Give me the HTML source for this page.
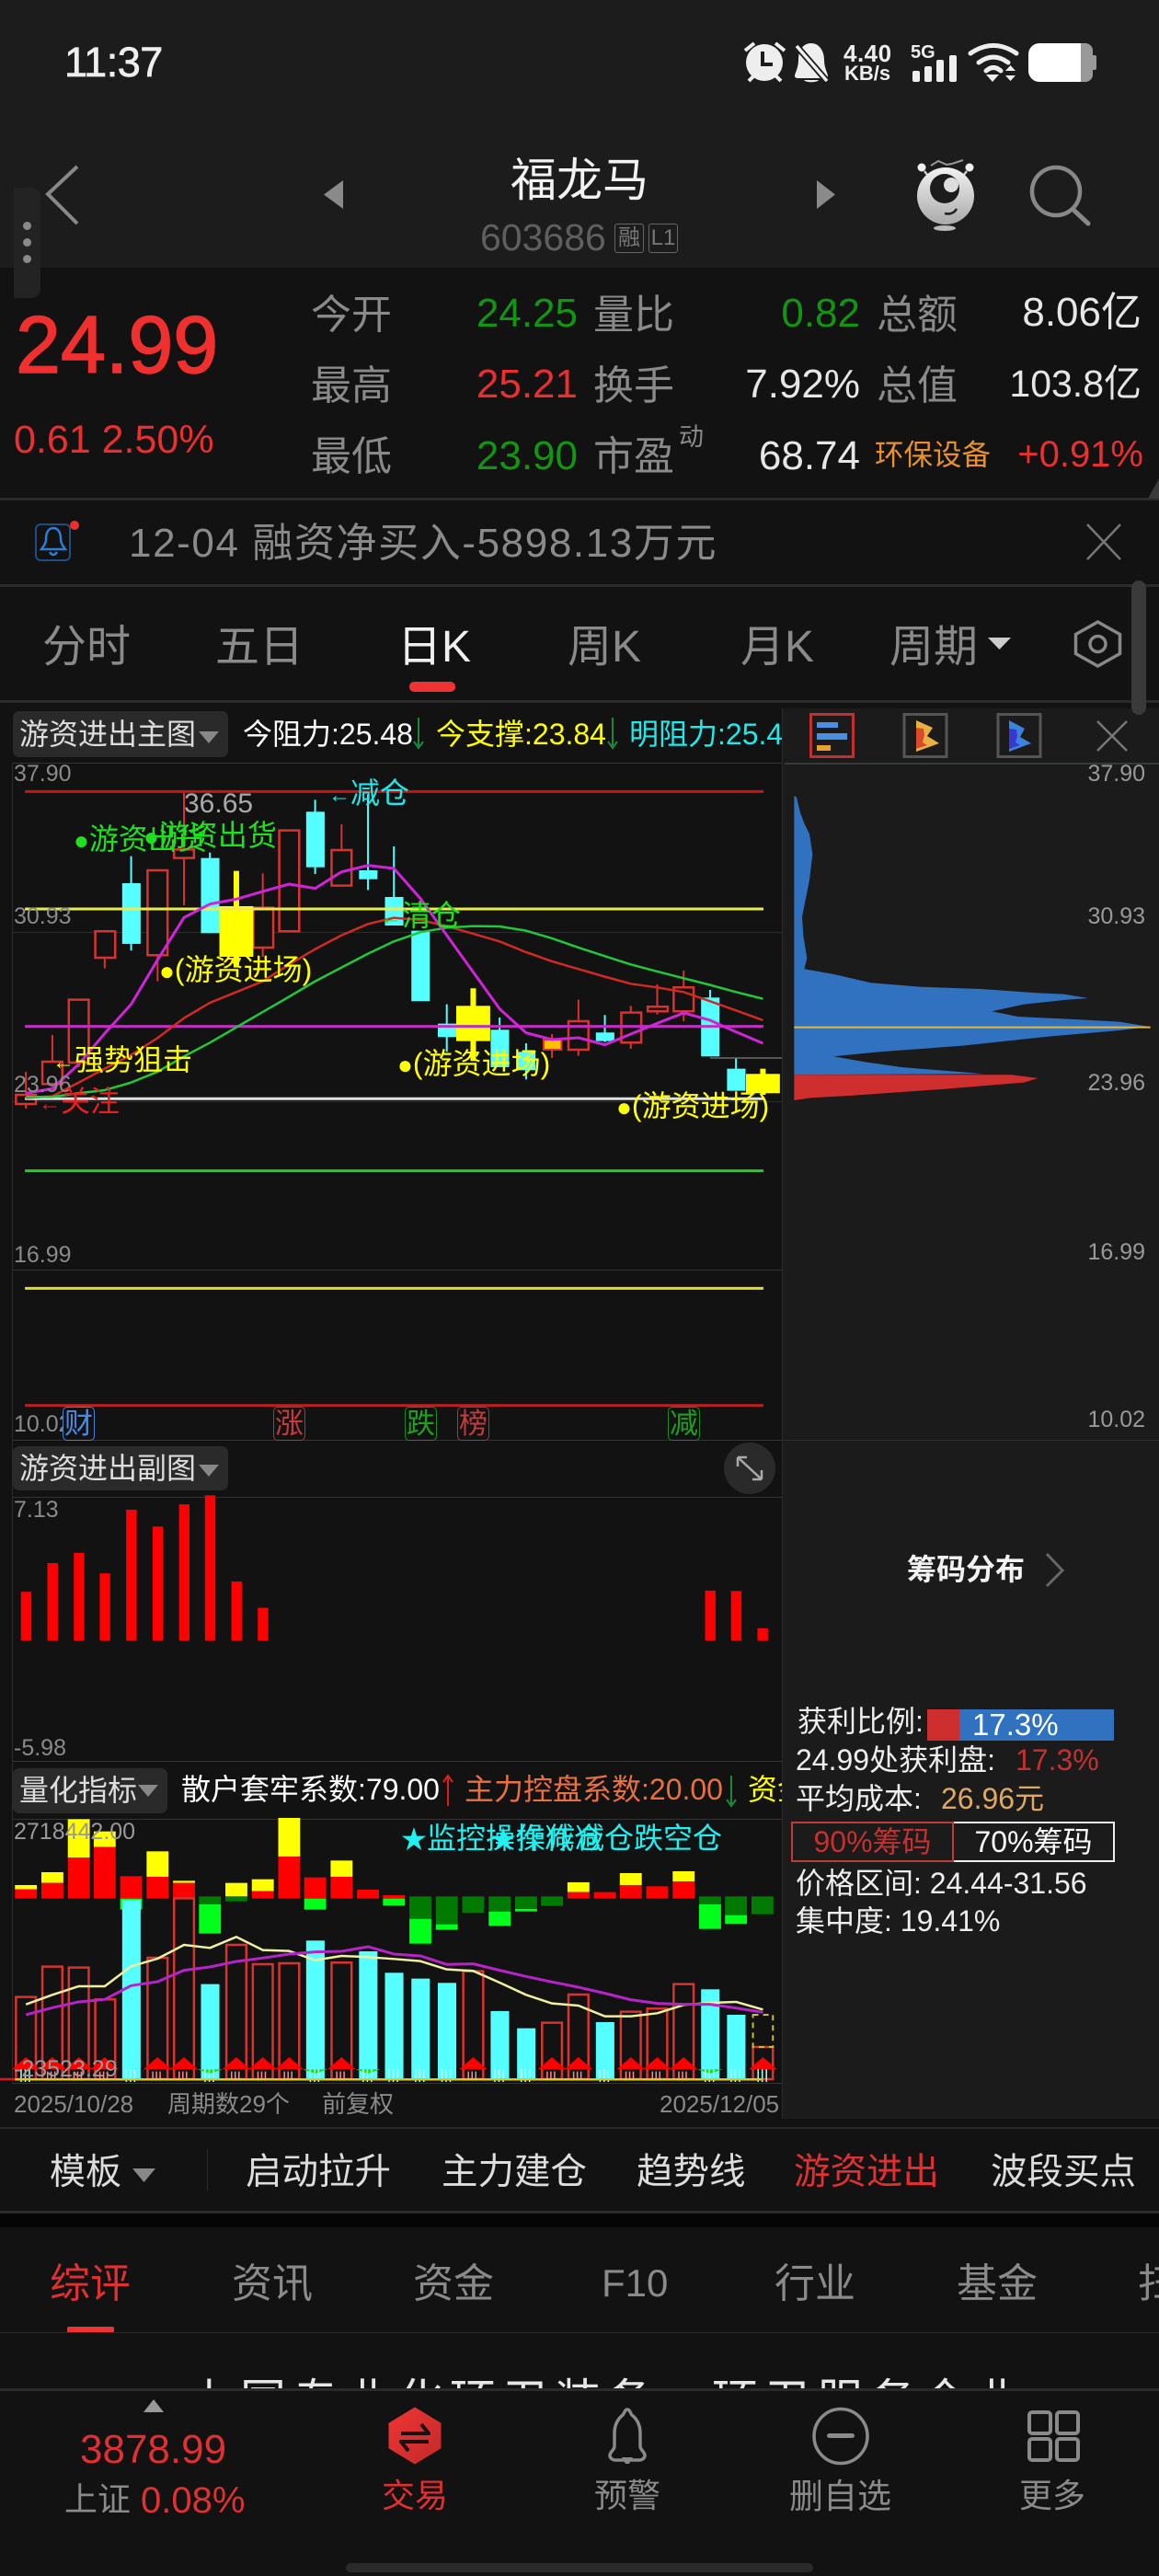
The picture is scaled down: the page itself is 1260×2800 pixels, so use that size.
<!DOCTYPE html>
<html lang="zh"><head><meta charset="utf-8"><title>福龙马</title>
<style>
html,body{margin:0;padding:0;background:#121213;}
#p{position:relative;width:1260px;height:2800px;overflow:hidden;background:#121213;font-family:"Liberation Sans","Noto Sans CJK SC",sans-serif;color:#ddd;}
.t{position:absolute;white-space:nowrap;line-height:1;}
.b{position:absolute;}
.g{color:#8a8a8a}.gr{color:#129612}.rd{color:#ea2f2f}.wh{color:#e6e6e6}
svg{position:absolute;left:0;top:0;overflow:visible;}
.r{fill:none;stroke:#d8332f;stroke-width:2.5;vector-effect:non-scaling-stroke}
.rf{fill:#121213;stroke:#d8332f;stroke-width:2.5;vector-effect:non-scaling-stroke}
.c{fill:#55ffff}.y{fill:#ff0}.re{fill:#f00}.dg{fill:#007a00}.bg{fill:#00ff1a}
.l{fill:none;vector-effect:non-scaling-stroke;stroke-linejoin:round}
.pill{position:absolute;left:14px;background:#2a2a2b;border-radius:7px;}
.a{font-size:32px}
.d{font-size:28px;vertical-align:0}
.badge{position:absolute;top:1529px;width:33px;height:35px;border:1px solid;border-radius:5px;font-size:31px;line-height:35px;text-align:center;}
</style></head><body><div id="p">

<!-- header bg -->
<div class="b" style="left:0;top:0;width:1260px;height:291px;background:#1c1c1d"></div>

<!-- status bar -->
<div class="t" style="left:70px;top:45px;font-size:45px;color:#eee;-webkit-text-stroke:.7px #eee;letter-spacing:-.5px">11:37</div>
<svg width="1260" height="120" fill="#eee">
 <circle cx="831" cy="68" r="20"/>
 <path d="M829 56v14h11" fill="none" stroke="#1c1c1d" stroke-width="4"/>
 <path d="M810 55l10-8M853 55l-10-8M814 88l6-6M849 88l-6-6" stroke="#eee" stroke-width="4" fill="none"/>
 <path d="M882 47c-10 0-14 9-14 18 0 8-3 13-4 17 0 2 1 3 4 3h28c3 0 4-1 4-3-1-4-4-9-4-17 0-9-5-18-14-18z"/>
 <path d="M874 87h16c-2 3-14 3-16 0z"/>
 <path d="M866 50l33 38" stroke="#1c1c1d" stroke-width="7"/>
 <path d="M866 50l33 38" stroke="#eee" stroke-width="3.5"/>
 <rect x="992" y="77" width="8" height="12" rx="2"/><rect x="1005" y="72" width="8" height="17" rx="2"/><rect x="1018" y="65" width="8" height="24" rx="2"/><rect x="1032" y="60" width="8" height="29" rx="2"/>
 <path d="M1055 58q25-17 50 0M1064 68q16-12 32 0M1072 77q8-7 16 0" fill="none" stroke="#eee" stroke-width="5" stroke-linecap="round"/>
 <path d="M1072 81h14l-7 8zM1093 77h11l-5.500-6zM1093 82h11l-5.500 6z"/>
 <path d="M1130 47h47v42h-47a12 12 0 0 1-12-12v-18a12 12 0 0 1 12-12z" fill="#fff"/>
 <path d="M1175 47h5a8 8 0 0 1 8 8v5h2a2 2 0 0 1 2 2v12a2 2 0 0 1-2 2h-2v5a8 8 0 0 1-8 8h-5z" fill="#999"/>
</svg>
<div class="t" style="left:917px;top:45px;font-size:26px;font-weight:bold;color:#eee;letter-spacing:.5px">4.40</div>
<div class="t" style="left:918px;top:69px;font-size:22px;font-weight:bold;color:#eee">KB/s</div>
<div class="t" style="left:990px;top:47px;font-size:20px;font-weight:bold;color:#eee">5G</div>

<!-- title row -->
<svg width="1260" height="300">
 <path d="M84 181L52 211l32 32" fill="none" stroke="#888" stroke-width="4"/>
 <path d="M373 196v31l-21-15.500z" fill="#8a8a8a"/>
 <path d="M888 196v31l20-15.500z" fill="#8a8a8a"/>
 <circle cx="1002" cy="182" r="4.500" fill="#eee"/><circle cx="1054" cy="182" r="4.500" fill="#eee"/>
 <path d="M1005 186l6 8M1051 186l-6 8" stroke="#ccc" stroke-width="2.500"/>
 <path d="M1012 180l8-5 9 4 6-1 12-4" fill="none" stroke="#999" stroke-width="2"/>
 <defs><linearGradient id="mg" x1="0" y1="0" x2="0" y2="1"><stop offset="0" stop-color="#f2f2f2"/><stop offset="1" stop-color="#aaa"/></linearGradient></defs>
 <circle cx="1028" cy="213" r="31" fill="url(#mg)"/>
 <circle cx="1027" cy="205" r="16" fill="#1c1c1d"/>
 <circle cx="1034" cy="201" r="8" fill="#ddd"/>
 <path d="M1027 232q9 2 13-5" fill="none" stroke="#222" stroke-width="2.500"/>
 <ellipse cx="1027" cy="248" rx="12" ry="3" fill="#bbb"/>
 <circle cx="1148" cy="208" r="26" fill="none" stroke="#888" stroke-width="4.500"/>
 <path d="M1168 229l15 14" stroke="#888" stroke-width="5" stroke-linecap="round"/>
</svg>
<div class="t" style="left:555px;top:171px;font-size:50px;color:#f2f2f2">福龙马</div>
<div class="t" style="left:522px;top:238px;font-size:41px;color:#5f5f5f">603686</div>
<div class="t" style="left:668px;top:243px;width:30px;height:30px;border:1px solid #666;border-radius:3px;font-size:24px;line-height:30px;text-align:center;color:#777">融</div>
<div class="t" style="left:705px;top:243px;width:30px;height:30px;border:1px solid #666;border-radius:3px;font-size:24px;line-height:30px;text-align:center;color:#777">L1</div>

<!-- floating handle -->
<div class="b" style="left:15px;top:204px;width:29px;height:120px;background:#232324;border-radius:0 10px 10px 0"></div>
<div class="b" style="left:25px;top:241px;width:9px;height:9px;background:#8a8a8a;border-radius:50%"></div>
<div class="b" style="left:25px;top:259px;width:9px;height:9px;background:#8a8a8a;border-radius:50%"></div>
<div class="b" style="left:25px;top:277px;width:9px;height:9px;background:#8a8a8a;border-radius:50%"></div>

<!-- quote -->
<div class="t rd" style="left:17px;top:331px;font-size:88px;color:#f0302f;-webkit-text-stroke:1.500px #f0302f">24.99</div>
<div class="t rd" style="left:15px;top:457px;font-size:43px">0.61 2.50%</div>

<div class="t g" style="left:338px;top:321px;font-size:44px">今开</div>
<div class="t g" style="left:338px;top:398px;font-size:44px">最高</div>
<div class="t g" style="left:338px;top:475px;font-size:44px">最低</div>
<div class="t gr" style="right:632px;top:319px;font-size:44px">24.25</div>
<div class="t rd" style="right:632px;top:396px;font-size:44px">25.21</div>
<div class="t gr" style="right:632px;top:474px;font-size:44px">23.90</div>
<div class="t g" style="left:645px;top:321px;font-size:44px">量比</div>
<div class="t g" style="left:645px;top:398px;font-size:44px">换手</div>
<div class="t g" style="left:645px;top:475px;font-size:44px">市盈</div>
<div class="t g" style="left:738px;top:462px;font-size:27px">动</div>
<div class="t gr" style="right:325px;top:319px;font-size:44px">0.82</div>
<div class="t wh" style="right:325px;top:396px;font-size:44px">7.92%</div>
<div class="t wh" style="right:325px;top:474px;font-size:44px">68.74</div>
<div class="t g" style="left:953px;top:321px;font-size:44px">总额</div>
<div class="t g" style="left:953px;top:398px;font-size:44px">总值</div>
<div class="t" style="left:951px;top:479px;font-size:31.500px;color:#e8912d">环保设备</div>
<div class="t wh" style="right:19px;top:318px;font-size:44px">8.06亿</div>
<div class="t wh" style="right:19px;top:397px;font-size:41px">103.8亿</div>
<div class="t rd" style="right:17px;top:474px;font-size:40px">+0.91%</div>
<div class="b" style="left:0;top:541px;width:1260px;height:3px;background:#2a2a2b"></div>
<svg width="1260" height="560"><path d="M1260 520v22h-12z" fill="#3a3a3b"/></svg>

<!-- notice -->
<svg width="1260" height="650">
 <rect x="39" y="570" width="37" height="39" rx="5" fill="none" stroke="#1c4f80" stroke-width="2"/>
 <path d="M58 574c-6 0-8 6-8 12 0 5-3 8-5 11h26c-2-3-5-6-5-11 0-6-2-12-8-12zM54 600q4 6 8 0" fill="none" stroke="#2b7fd4" stroke-width="2.500"/>
 <circle cx="81" cy="571" r="5" fill="#ea2f2f"/>
 <path d="M1182 570l36 38M1218 570l-36 38" stroke="#777" stroke-width="2.500"/>
</svg>
<div class="t" style="left:140px;top:569px;font-size:44px;color:#8a8a8a;letter-spacing:1.600px">12-04 融资净买入-5898.13万元</div>
<div class="b" style="left:0;top:635px;width:1260px;height:3px;background:#2a2a2b"></div>

<!-- tabs -->
<div class="t g" style="left:46px;top:680px;font-size:48px">分时</div>
<div class="t g" style="left:234px;top:680px;font-size:48px">五日</div>
<div class="t" style="left:432px;top:680px;font-size:48px;color:#f0f0f0">日K</div>
<div class="t g" style="left:617px;top:680px;font-size:48px">周K</div>
<div class="t g" style="left:805px;top:680px;font-size:48px">月K</div>
<div class="t g" style="left:967px;top:680px;font-size:48px">周期</div>
<svg width="1260" height="780">
 <path d="M1074 693h25l-12.500 13z" fill="#ccc"/>
 <path d="M1193.500 676l24 13.500v21l-24 13.500-24-13.500v-21z" fill="none" stroke="#888" stroke-width="3.500"/>
 <circle cx="1193.500" cy="700" r="8.500" fill="none" stroke="#888" stroke-width="3.500"/>
</svg>
<div class="b" style="left:445px;top:741px;width:50px;height:11px;background:#e33;border-radius:5px"></div>
<div class="b" style="left:0;top:761px;width:1260px;height:3px;background:#2a2a2b"></div>

<!-- main chart lines & grid -->
<div class="b" style="left:13px;top:829px;width:837px;height:1px;background:#333"></div>
<div class="b" style="left:13px;top:1013px;width:837px;height:1px;background:#2d2d2d"></div>
<div class="b" style="left:13px;top:1197px;width:837px;height:1px;background:#2d2d2d"></div>
<div class="b" style="left:13px;top:1380px;width:837px;height:1px;background:#333"></div>
<div class="b" style="left:13px;top:1565px;width:837px;height:1px;background:#333"></div>
<div class="b" style="left:13px;top:1627px;width:837px;height:1px;background:#333"></div>
<div class="b" style="left:13px;top:1914px;width:837px;height:1px;background:#333"></div>
<div class="b" style="left:13px;top:1977px;width:837px;height:1px;background:#333"></div>
<div class="b" style="left:13px;top:2264px;width:837px;height:1px;background:#333"></div>
<div class="b" style="left:13px;top:829px;width:1px;height:1435px;background:#2d2d2d"></div>
<div class="b" style="left:772px;top:1149px;width:78px;height:2px;background:#555"></div>

<svg width="1260" height="1300">
 <g transform="translate(0 760) scale(.5421 .3333)">
  <path class="l" stroke="#d8332f" stroke-width="2" d="M52 1215V1335M105 1095V1182M158 1185V1200M210 843V878M316 555V920M369 305V672M527 568V840M685 408V492M1107 1092V1170M1160 980V1163M1265 1000V1140M1318 930V1028M1371 885V1050"/>
  <path class="l" stroke="#55ffff" stroke-width="2" d="M263 512V820M421 500V763M632 328V570M738 310V622M790 480V738M896 995V1150M1002 1038V1190M1055 1122V1240M1213 1030V1118M1424 948V1165M1476 1172V1277"/>
  <path class="l" stroke="#ff0" stroke-width="6" d="M474 560V875M949 943V1180M1530 1205V1290"/>
  <rect class="rf" x="32" y="1290" width="40" height="30"/>
  <rect class="rf" x="85" y="1182" width="40" height="73"/>
  <rect class="rf" x="138" y="980" width="40" height="205"/>
  <rect class="rf" x="191" y="757" width="40" height="86"/>
  <rect class="rf" x="296" y="558" width="40" height="277"/>
  <rect class="rf" x="349" y="490" width="40" height="28"/>
  <rect class="rf" x="508" y="680" width="40" height="130"/>
  <rect class="rf" x="560" y="428" width="40" height="329"/>
  <rect class="rf" x="665" y="492" width="40" height="116"/>
  <rect class="rf" x="1140" y="1050" width="40" height="93"/>
  <rect class="rf" x="1246" y="1022" width="40" height="98"/>
  <rect class="rf" x="1299" y="1003" width="40" height="15"/>
  <rect class="rf" x="1351" y="940" width="40" height="78"/>
  <rect x="1090" y="1110" width="36" height="33" fill="#ffc000" stroke="#d8332f" stroke-width="2" vector-effect="non-scaling-stroke"/>
  <rect class="c" x="245" y="600" width="37" height="198"/>
  <rect class="c" x="403" y="518" width="37" height="245"/>
  <rect class="c" x="614" y="367" width="37" height="181"/>
  <rect class="c" x="720" y="558" width="37" height="29"/>
  <rect class="c" x="772" y="645" width="37" height="93"/>
  <rect class="c" x="825" y="755" width="37" height="230"/>
  <rect class="c" x="878" y="1058" width="37" height="44"/>
  <rect class="c" x="984" y="1078" width="37" height="122"/>
  <rect class="c" x="1037" y="1150" width="37" height="60"/>
  <rect class="c" x="1195" y="1087" width="37" height="28"/>
  <rect class="c" x="1406" y="973" width="37" height="192"/>
  <rect class="c" x="1458" y="1205" width="37" height="72"/>
  <rect class="y" x="440" y="675" width="68" height="165"/>
  <rect class="y" x="915" y="1000" width="68" height="115"/>
  <rect class="y" x="1496" y="1222" width="68" height="63"/>
  <path class="l" stroke="#c81414" stroke-width="3" d="M50 301H1531"/>
  <path class="l" stroke="#ecec50" stroke-width="3" d="M50 684H1531"/>
  <path class="l" stroke="#c030c0" stroke-width="3" d="M50 1067H1531"/>
  <path class="l" stroke="#e0e0e0" stroke-width="3" d="M50 1303H1531"/>
  <polyline class="l" stroke="#d12a22" stroke-width="2.500" points="52,1300 105,1295 158,1250 210,1205 263,1160 316,1105 369,1040 421,990 474,955 527,920 580,865 632,815 685,770 738,733 790,713 843,720 896,740 949,765 1002,790 1055,825 1107,855 1160,880 1213,905 1265,928 1318,940 1371,955 1424,985 1476,1015 1530,1047"/>
  <polyline class="l" stroke="#22c83c" stroke-width="2.500" points="52,1297 105,1297 158,1285 210,1275 263,1250 316,1215 369,1165 421,1120 474,1070 527,1020 580,970 632,920 685,875 738,830 790,790 843,760 896,745 949,740 1002,741 1055,755 1107,780 1160,810 1213,838 1265,865 1318,888 1371,910 1424,932 1476,955 1530,977"/>
  <polyline class="l" stroke="#d024d8" stroke-width="3" points="52,1285 105,1270 158,1190 210,1090 263,995 316,850 369,712 421,668 474,652 527,627 580,603 632,617 685,563 738,542 790,552 843,650 896,770 949,890 1002,1010 1055,1088 1107,1110 1160,1104 1213,1127 1265,1092 1318,1057 1371,1023 1424,1047 1476,1085 1530,1122"/>
 </g>
 <g transform="translate(0 1220) scale(.5421 .4464)">
  <path class="l" stroke="#20d020" stroke-width="3" d="M50 118H1531"/>
  <path class="l" stroke="#dddd30" stroke-width="3" d="M50 404H1531"/>
  <path class="l" stroke="#b82020" stroke-width="3" d="M50 689H1531"/>
 </g>
</svg>

<!-- main header -->
<div class="pill" style="top:773px;width:234px;height:50px"></div>
<div class="t" style="left:21px;top:782px;font-size:32px;color:#ddd">游资进出主图</div>
<svg width="1260" height="830"><path d="M216 795h22l-11 13z" fill="#888"/></svg>
<div class="t" style="left:264px;top:782px;font-size:32px;color:#fff">今阻力:25.48</div>
<svg width="1260" height="830"><path d="M455 780v32M450 806l5 7 5-7M666 780v32M661 806l5 7 5-7" stroke="#1a8a3a" stroke-width="2" fill="none"/></svg>
<div class="t" style="left:474px;top:782px;font-size:32px;color:#ff0">今支撑:23.84</div>
<div class="t" style="left:684px;top:782px;font-size:32px;color:#22e8e8">明阻力:25.48</div>

<!-- chart labels -->
<div class="t g" style="left:15px;top:829px;font-size:25px">37.90</div>
<div class="t" style="left:200px;top:859px;font-size:30px;color:#aaa">36.65</div>
<div class="t g" style="left:15px;top:984px;font-size:25px">30.93</div>
<div class="t g" style="left:15px;top:1167px;font-size:25px">23.96</div>
<div class="t g" style="left:15px;top:1352px;font-size:25px">16.99</div>
<div class="t g" style="left:15px;top:1536px;font-size:25px">10.02</div>

<!-- annotations -->
<div class="t a" style="left:80px;top:896px;color:#1ee01e"><span class="d">●</span>游资出货</div>
<div class="t a" style="left:156px;top:892px;color:#1ee01e"><span class="d">●</span>游资出货</div>
<div class="t a" style="left:357px;top:846px;color:#22e8e8"><span style="font-size:24px;vertical-align:1px">←</span>减仓</div>
<div class="t a" style="left:413px;top:979px;color:#1ee01e"><span style="font-size:24px;vertical-align:1px">←</span>清仓</div>
<div class="t a" style="left:173px;top:1038px;color:#ff0"><span class="d">●</span>(游资进场)</div>
<div class="t a" style="left:432px;top:1140px;color:#ff0"><span class="d">●</span>(游资进场)</div>
<div class="t a" style="left:670px;top:1186px;color:#ff0"><span class="d">●</span>(游资进场)</div>
<div class="t a" style="left:57px;top:1136px;color:#ff0"><span style="font-size:24px;vertical-align:1px">←</span>强势狙击</div>
<div class="t a" style="left:42px;top:1181px;color:#e62020"><span style="font-size:24px;vertical-align:1px">←</span>关注</div>

<!-- badges -->
<div class="badge" style="left:68px;border-color:#4a80d0;color:#4a8ae0;background:#121213">财</div>
<div class="badge" style="left:297px;border-color:#b83030;color:#c83a3a">涨</div>
<div class="badge" style="left:440px;border-color:#1a8a1a;color:#1ea01e">跌</div>
<div class="badge" style="left:497px;border-color:#b83030;color:#c83a3a">榜</div>
<div class="badge" style="left:726px;border-color:#1a8a1a;color:#1ea01e">减</div>

<!-- sub chart -->
<div class="pill" style="top:1572px;width:234px;height:48px"></div>
<div class="t" style="left:21px;top:1580px;font-size:32px;color:#ddd">游资进出副图</div>
<svg width="1260" height="2300">
 <path d="M216 1592h22l-11 13z" fill="#888"/>
 <ellipse cx="815" cy="1596" rx="28" ry="28" fill="#2a2a2b"/>
 <path d="M802 1584l26 24M802 1584h10M802 1584v10M828 1608h-10M828 1608v-10" stroke="#aaa" stroke-width="2.500" fill="none"/>
 <g transform="translate(0 1220) scale(.5421 .4464)" fill="#f00">
  <rect x="42" y="1143" width="21" height="119"/><rect x="95" y="1073" width="21" height="189"/><rect x="148" y="1048" width="21" height="214"/><rect x="200" y="1098" width="21" height="164"/><rect x="253" y="943" width="21" height="319"/><rect x="306" y="984" width="21" height="278"/><rect x="359" y="930" width="21" height="332"/><rect x="411" y="908" width="21" height="354"/><rect x="464" y="1118" width="21" height="144"/><rect x="517" y="1182" width="21" height="80"/><rect x="1414" y="1140" width="21" height="122"/><rect x="1466" y="1141" width="21" height="121"/><rect x="1519" y="1232" width="21" height="30"/>
 </g>
</svg>
<div class="t g" style="left:15px;top:1629px;font-size:25px">7.13</div>
<div class="t g" style="left:15px;top:1888px;font-size:25px">-5.98</div>

<!-- quant chart -->
<div class="pill" style="top:1922px;width:168px;height:49px"></div>
<div class="t" style="left:21px;top:1930px;font-size:32px;color:#ddd">量化指标</div>
<div class="t" style="left:197px;top:1929px;font-size:32px;color:#fff">散户套牢系数:79.00</div>
<div class="t" style="left:505px;top:1929px;font-size:32px;color:#ea7040">主力控盘系数:20.00</div>
<div class="t" style="left:813px;top:1929px;font-size:32px;color:#ff0">资金:流入</div>
<svg width="1260" height="2300">
 <path d="M150 1940h22l-11 13z" fill="#888"/>
 <path d="M487 1931v32M482 1937l5-7 5 7" stroke="#d82020" stroke-width="2" fill="none"/>
 <path d="M795 1930v32M790 1956l5 7 5-7" stroke="#1a8a3a" stroke-width="2" fill="none"/>
 <g transform="translate(0 1900) scale(.5421 .3333)">
  <rect class="y" x="30" y="447" width="44" height="14"/><rect class="re" x="30" y="461" width="44" height="30"/>
  <rect class="y" x="83" y="405" width="44" height="35"/><rect class="re" x="83" y="440" width="44" height="51"/>
  <rect class="y" x="136" y="232" width="44" height="125"/><rect class="re" x="136" y="357" width="44" height="134"/>
  <rect class="y" x="188" y="272" width="44" height="51"/><rect class="re" x="188" y="323" width="44" height="168"/>
  <rect class="re" x="241" y="418" width="44" height="73"/><rect class="bg" x="241" y="491" width="44" height="36"/>
  <rect class="y" x="294" y="337" width="44" height="83"/><rect class="re" x="294" y="420" width="44" height="71"/>
  <rect class="y" x="347" y="433" width="44" height="7"/><rect class="re" x="347" y="440" width="44" height="51"/>
  <rect class="dg" x="399" y="484" width="44" height="26"/><rect class="bg" x="399" y="510" width="44" height="95"/>
  <rect class="y" x="452" y="440" width="44" height="44"/><rect class="dg" x="452" y="484" width="44" height="16"/>
  <rect class="y" x="505" y="428" width="44" height="39"/><rect class="re" x="505" y="467" width="44" height="24"/>
  <rect class="y" x="558" y="228" width="44" height="126"/><rect class="re" x="558" y="354" width="44" height="137"/>
  <rect class="re" x="610" y="422" width="44" height="69"/><rect class="bg" x="610" y="491" width="44" height="36"/>
  <rect class="y" x="663" y="367" width="44" height="53"/><rect class="re" x="663" y="420" width="44" height="71"/>
  <rect class="re" x="716" y="462" width="44" height="29"/>
  <rect class="re" x="768" y="480" width="44" height="11"/><rect class="bg" x="768" y="491" width="44" height="23"/>
  <rect class="dg" x="821" y="484" width="44" height="73"/><rect class="bg" x="821" y="557" width="44" height="81"/>
  <rect class="dg" x="874" y="484" width="44" height="91"/><rect class="bg" x="874" y="575" width="44" height="18"/>
  <rect class="dg" x="927" y="484" width="44" height="53"/>
  <rect class="dg" x="980" y="484" width="44" height="50"/><rect class="bg" x="980" y="534" width="44" height="46"/>
  <rect class="dg" x="1033" y="484" width="44" height="41"/><rect class="bg" x="1033" y="525" width="44" height="8"/>
  <rect class="dg" x="1085" y="484" width="44" height="31"/>
  <rect class="y" x="1138" y="438" width="44" height="32"/><rect class="re" x="1138" y="470" width="44" height="21"/>
  <rect class="re" x="1191" y="470" width="44" height="21"/>
  <rect class="y" x="1243" y="408" width="44" height="39"/><rect class="re" x="1243" y="447" width="44" height="44"/>
  <rect class="re" x="1296" y="451" width="44" height="40"/>
  <rect class="y" x="1349" y="402" width="44" height="33"/><rect class="re" x="1349" y="435" width="44" height="56"/>
  <rect class="dg" x="1402" y="484" width="44" height="26"/><rect class="bg" x="1402" y="510" width="44" height="80"/>
  <rect class="dg" x="1454" y="484" width="44" height="61"/><rect class="bg" x="1454" y="545" width="44" height="28"/>
  <rect class="dg" x="1507" y="484" width="44" height="58"/>

  <rect class="r" x="32" y="812" width="40" height="268"/><rect class="r" x="85" y="713" width="40" height="367"/><rect class="r" x="138" y="716" width="40" height="364"/><rect class="r" x="191" y="820" width="40" height="260"/>
  <rect class="r" x="296" y="684" width="40" height="396"/><rect class="r" x="349" y="490" width="40" height="590"/>
  <rect class="r" x="454" y="642" width="40" height="438"/><rect class="r" x="507" y="705" width="40" height="375"/><rect class="r" x="560" y="702" width="40" height="378"/>
  <rect class="r" x="665" y="700" width="40" height="380"/><rect class="r" x="929" y="728" width="40" height="352"/>
  <rect class="r" x="1087" y="896" width="40" height="184"/><rect class="r" x="1140" y="804" width="40" height="276"/>
  <rect class="r" x="1245" y="860" width="40" height="220"/><rect class="r" x="1298" y="850" width="40" height="230"/><rect class="r" x="1351" y="770" width="40" height="310"/>
  <rect class="r" x="1510" y="975" width="40" height="105"/>
  <rect x="1510" y="870" width="40" height="105" fill="none" stroke="#c8c030" stroke-width="2" stroke-dasharray="6 5" vector-effect="non-scaling-stroke"/>
  <rect class="c" x="245" y="495" width="37" height="585"/><rect class="c" x="403" y="770" width="37" height="310"/><rect class="c" x="614" y="628" width="37" height="452"/><rect class="c" x="720" y="663" width="37" height="417"/><rect class="c" x="772" y="733" width="37" height="347"/><rect class="c" x="825" y="752" width="37" height="328"/><rect class="c" x="878" y="766" width="37" height="314"/><rect class="c" x="984" y="858" width="37" height="222"/><rect class="c" x="1037" y="914" width="37" height="166"/><rect class="c" x="1195" y="894" width="37" height="186"/><rect class="c" x="1406" y="787" width="37" height="293"/><rect class="c" x="1458" y="870" width="37" height="210"/>

  <path fill="#f00" d="M24 1048l28-40 28 40zM77 1048l28-40 28 40zM130 1048l28-40 28 40zM182 1048l28-40 28 40zM288 1048l28-40 28 40zM341 1048l28-40 28 40zM446 1048l28-40 28 40zM499 1048l28-40 28 40zM552 1048l28-40 28 40zM657 1048l28-40 28 40zM921 1048l28-40 28 40zM1079 1048l28-40 28 40zM1132 1048l28-40 28 40zM1237 1048l28-40 28 40zM1290 1048l28-40 28 40zM1343 1048l28-40 28 40zM1502 1048l28-40 28 40z"/>
  <path fill="#20e020" d="M396 1048h50l-25 14zM607 1048h50l-25 14zM713 1048h50l-25 14zM1399 1048h50l-25 14z"/>
  <path class="l" stroke="#f88" stroke-width="10" stroke-dasharray="1.500 2.500" d="M94 1070H116M147 1070H169M199 1070H221M305 1070H327M358 1070H380M463 1070H485M516 1070H538M569 1070H591M674 1070H696M938 1070H960M1096 1070H1118M1149 1070H1171M1254 1070H1276M1307 1070H1329M1360 1070H1382"/>
  <path class="l" stroke="#bfe" stroke-width="14" stroke-dasharray="1.500 3" d="M41 1068H63M252 1068H274M410 1068H432M621 1068H643M727 1068H749M779 1068H801M832 1068H854M885 1068H907M991 1068H1013M1044 1068H1066M1202 1068H1224M1413 1068H1435M1465 1068H1487M1519 1068H1541"/>
  <polyline class="l" stroke="#f0f0a0" stroke-width="2.500" points="52,836 105,805 158,777 210,777 263,712 316,687 369,642 421,652 474,616 527,659 580,662 632,692 685,678 738,682 790,688 843,695 896,722 949,727 1002,765 1055,805 1107,833 1160,840 1213,875 1265,875 1318,865 1371,838 1424,831 1476,828 1530,853"/>
  <polyline class="l" stroke="#b624c8" stroke-width="3" points="52,870 105,847 158,828 210,820 263,775 316,762 369,725 421,714 474,696 527,685 580,672 632,665 685,663 738,648 790,672 843,678 896,706 949,704 1002,725 1055,745 1107,763 1160,780 1213,800 1265,821 1318,833 1371,836 1424,836 1476,848 1530,862"/>
  <path class="l" stroke="#d81818" stroke-width="2.500" d="M0 1080H40"/>
  <path class="l" stroke="#d8c828" stroke-width="2.500" d="M30 1081H1530"/>
 </g>
</svg>
<div class="t" style="left:15px;top:1979px;font-size:25px;color:#999">2718442.00</div>
<div class="t" style="left:15px;top:2237px;font-size:25px;color:#999">-23523.29</div>
<div class="t" style="left:436px;top:1982px;font-size:32px;color:#22f0f0"><span style="font-size:28px">★</span>监控操作减仓</div>
<div class="t" style="left:533px;top:1982px;font-size:32px;color:#22f0f0"><span style="font-size:28px">★</span>操作减仓跌空仓</div>
<div class="t" style="left:15px;top:2274px;font-size:26px;color:#8a8a8a">2025/10/28</div>
<div class="t" style="left:182px;top:2274px;font-size:26px;color:#8a8a8a">周期数29个</div>
<div class="t" style="left:350px;top:2274px;font-size:26px;color:#8a8a8a">前复权</div>
<div class="t" style="left:717px;top:2274px;font-size:26px;color:#8a8a8a">2025/12/05</div>

<!-- right panel -->
<div class="b" style="left:850px;top:770px;width:410px;height:1533px;background:#1b1b1b;border-left:1px solid #2a2a2a;box-sizing:border-box"></div>
<div class="b" style="left:853px;top:829px;width:407px;height:2px;background:#333b3b"></div>
<div class="b" style="left:851px;top:1565px;width:409px;height:1px;background:#2d2d2d"></div>
<div class="b" style="left:1230px;top:631px;width:16px;height:146px;background:#3a3a3b;border-radius:8px"></div>
<svg width="1260" height="1300">
 <rect x="881.500" y="776.500" width="46" height="46" fill="none" stroke="#c03030" stroke-width="3"/>
 <rect x="888" y="785" width="23" height="6" fill="#4a8fe0"/><rect x="888" y="797" width="33" height="7" fill="#4a8fe0"/><rect x="888" y="810" width="15" height="6" fill="#e8a030"/>
 <rect x="983" y="776.500" width="46" height="46" fill="none" stroke="#555" stroke-width="3"/>
 <path d="M996 783l18 8-6 9 13 8-25 9z" fill="#e8b040"/><path d="M996 791l8 1 1 7-2 8 5 3-12 4z" fill="#d84a2a"/>
 <rect x="1085" y="776.500" width="46" height="46" fill="none" stroke="#555" stroke-width="3"/>
 <path d="M1097 783l17 9-5 9 12 7-24 9z" fill="#3c82e0"/><path d="M1097 792l8 1 1 7-2 7 5 3-12 4z" fill="#3838d0"/>
 <path d="M1193 784l32 32M1225 784l-32 32" stroke="#777" stroke-width="2.500"/>
 <g transform="translate(840 760) scale(.3333)">
  <path fill="#3072c0" d="M70 315L78 320 90 370 103 405 120 440 130 505 120 590 110 640 96 710 100 770 112 845 103 880 200 897 320 925 480 938 680 945 860 958 950 962 1030 975 960 980 820 995 715 1018 800 1035 1000 1045 1130 1052 1230 1068 1130 1080 900 1100 620 1130 350 1150 198 1165 300 1183 420 1200 690 1222 70 1225z"/>
  <path fill="#ce2e2e" d="M70 1225L780 1225 865 1236 820 1250 550 1272 250 1293 125 1300 70 1308z"/>
  <rect x="70" y="1067" width="1162" height="6" fill="#e0b840"/>
 </g>
 <path d="M1138 1689l17 18-17 17" fill="none" stroke="#666" stroke-width="3"/>
</svg>
<div class="t" style="right:15px;top:829px;font-size:25px;color:#999">37.90</div>
<div class="t" style="right:15px;top:984px;font-size:25px;color:#999">30.93</div>
<div class="t" style="right:15px;top:1165px;font-size:25px;color:#999">23.96</div>
<div class="t" style="right:15px;top:1349px;font-size:25px;color:#999">16.99</div>
<div class="t" style="right:15px;top:1531px;font-size:25px;color:#999">10.02</div>

<div class="t" style="left:986px;top:1690px;font-size:32px;font-weight:bold;color:#f2f2f2">筹码分布</div>
<div class="t" style="left:867px;top:1855px;font-size:32px;color:#eee">获利比例:</div>
<div class="b" style="left:1008px;top:1858px;width:35px;height:34px;background:#ce2e2e"></div>
<div class="b" style="left:1043px;top:1858px;width:168px;height:34px;background:#3072c0"></div>
<div class="t" style="left:1057px;top:1858px;font-size:33px;color:#fff">17.3%</div>
<div class="t" style="left:865px;top:1897px;font-size:32px;color:#eee">24.99处获利盘:</div>
<div class="t" style="left:1104px;top:1897px;font-size:32px;color:#c83030">17.3%</div>
<div class="t" style="left:865px;top:1939px;font-size:32px;color:#eee">平均成本:</div>
<div class="t" style="left:1023px;top:1939px;font-size:32px;color:#e0a860">26.96元</div>
<div class="t" style="left:860px;top:1980px;width:177px;height:44px;box-sizing:border-box;border:2px solid #c03a3a;font-size:32px;line-height:40px;text-align:center;color:#c83030">90%筹码</div>
<div class="t" style="left:1037px;top:1980px;width:175px;height:44px;box-sizing:border-box;border:2px solid #eee;border-left:0;font-size:32px;line-height:40px;text-align:center;color:#fff">70%筹码</div>
<div class="t" style="left:865px;top:2031px;font-size:32px;color:#eee">价格区间: 24.44-31.56</div>
<div class="t" style="left:865px;top:2072px;font-size:32px;color:#eee">集中度: 19.41%</div>

<!-- template row -->
<div class="b" style="left:0;top:2312px;width:1260px;height:2px;background:#2a2a2b"></div>
<div class="b" style="left:225px;top:2336px;width:1px;height:45px;background:#2a2a2b"></div>
<div class="t" style="left:54px;top:2342px;font-size:39px;color:#ddd">模板</div>
<svg width="1260" height="2400"><path d="M144 2357h25l-12.500 15z" fill="#888"/></svg>
<div class="t" style="left:267px;top:2342px;font-size:39.500px;color:#ddd">启动拉升</div>
<div class="t" style="left:480px;top:2342px;font-size:39.500px;color:#ddd">主力建仓</div>
<div class="t" style="left:692px;top:2342px;font-size:39.500px;color:#ddd">趋势线</div>
<div class="t" style="left:863px;top:2342px;font-size:39.500px;color:#e03030">游资进出</div>
<div class="t" style="left:1077px;top:2342px;font-size:39.500px;color:#ddd">波段买点</div>
<div class="b" style="left:0;top:2403px;width:1260px;height:3px;background:#2a2a2b"></div>
<div class="b" style="left:0;top:2406px;width:1260px;height:15px;background:#050505"></div>

<!-- f10 tabs -->
<div class="t" style="left:54px;top:2461px;font-size:44px;color:#e03030">综评</div>
<div class="t g" style="left:252px;top:2461px;font-size:44px">资讯</div>
<div class="t g" style="left:449px;top:2461px;font-size:44px">资金</div>
<div class="t g" style="left:654px;top:2461px;font-size:42px">F10</div>
<div class="t g" style="left:842px;top:2461px;font-size:44px">行业</div>
<div class="t g" style="left:1040px;top:2461px;font-size:44px">基金</div>
<div class="t g" style="left:1237px;top:2461px;font-size:44px">扫</div>
<div class="b" style="left:73px;top:2529px;width:51px;height:7px;background:#e33;border-radius:2px"></div>
<div class="b" style="left:0;top:2535px;width:1260px;height:1px;background:#2a2a2b"></div>

<div class="t" style="left:204px;top:2585px;font-size:50px;letter-spacing:7px;color:#e6e6e6">上国专业化环卫装备、环卫服务企业</div>

<!-- bottom nav -->
<div class="b" style="left:0;top:2596px;width:1260px;height:204px;background:#121213;border-top:3px solid #2a2a2b;box-sizing:border-box"></div>
<svg width="1260" height="2800">
 <path d="M167 2608l11 14h-22z" fill="#999"/>
 <defs><linearGradient id="hx" x1="0" y1="0" x2="1" y2="1"><stop offset="0" stop-color="#f03434"/><stop offset="1" stop-color="#c22a2a"/></linearGradient></defs>
 <path d="M451 2617l28 17v27l-28 17-28-17v-27z" fill="url(#hx)" stroke="url(#hx)" stroke-width="1" stroke-linejoin="round"/>
 <path d="M436 2645h30l-8-10M466 2654h-30l8 10" fill="none" stroke="#1a1212" stroke-width="4" stroke-linejoin="round"/>
 <path d="M682 2619c-3 0-3 4-5 6-5 4-9 10-9 20v14c0 4-5 6-5 10 0 3 3 5 6 5h26c3 0 6-2 6-5 0-4-5-6-5-10v-14c0-10-4-16-9-20-2-2-2-6-5-6z" fill="none" stroke="#8a8a8a" stroke-width="3.500"/>
 <path d="M676 2671h12l-4 7h-4z" fill="#8a8a8a"/>
 <ellipse cx="914" cy="2648" rx="29" ry="29.500" fill="none" stroke="#8a8a8a" stroke-width="3.500"/>
 <rect x="899" y="2645" width="30" height="5" rx="2.500" fill="#8a8a8a"/>
 <g fill="none" stroke="#8a8a8a" stroke-width="4">
  <rect x="1119" y="2622" width="23" height="23" rx="3"/><rect x="1149" y="2622" width="23" height="23" rx="3"/>
  <rect x="1119" y="2651" width="23" height="23" rx="3"/><rect x="1149" y="2651" width="23" height="23" rx="3"/>
 </g>
</svg>
<div class="t rd" style="left:87px;top:2641px;font-size:44px;color:#e03030">3878.99</div>
<div class="t g" style="left:70px;top:2699px;font-size:36px">上证</div>
<div class="t" style="left:153px;top:2698px;font-size:40px;color:#e03030">0.08%</div>
<div class="t" style="left:415px;top:2695px;font-size:36px;color:#e03030">交易</div>
<div class="t g" style="left:646px;top:2695px;font-size:36px">预警</div>
<div class="t g" style="left:858px;top:2695px;font-size:37px">删自选</div>
<div class="t g" style="left:1108px;top:2695px;font-size:36px">更多</div>
<div class="b" style="left:376px;top:2786px;width:508px;height:10px;background:#2a2a2b;border-radius:5px"></div>

</div></body></html>
